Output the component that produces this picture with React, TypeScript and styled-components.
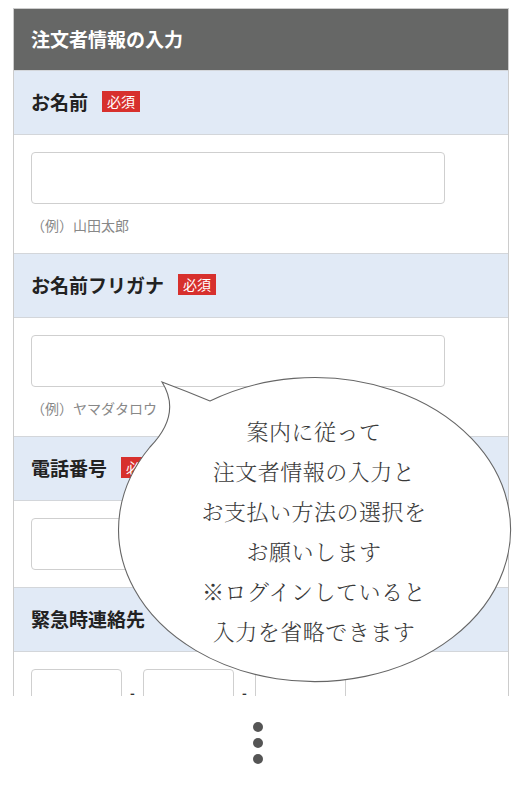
import styled, { createGlobalStyle } from "styled-components";

const GlobalStyle = createGlobalStyle`
    body {
        margin: 0;
        background: #fff;
        font-family: "Noto Sans CJK JP", "Noto Sans", sans-serif;
    }
`;

type FieldProps = {
    label: string;
    required?: boolean;
    hint?: string;
};

const TextField = ({ label, required, hint }: FieldProps) => {
    return (
        <>
            <SectionHead>
                <span>{label}</span>
                {required && <Badge>必須</Badge>}
            </SectionHead>
            <FieldBody>
                <TextInput type="text" />
                {hint && <Hint>{hint}</Hint>}
            </FieldBody>
        </>
    );
};

const App = () => {
    return (
        <Page>
            <GlobalStyle />
            <Panel>
                <TitleBar>注文者情報の入力</TitleBar>
                <TextField label="お名前" required hint="（例）山田太郎" />
                <TextField label="お名前フリガナ" required hint="（例）ヤマダタロウ" />
                <TextField label="電話番号" required />
                <SectionHead>
                    <span>緊急時連絡先</span>
                </SectionHead>
                <FieldBody>
                    <PhoneRow>
                        <SmallInput type="text" />
                        <Dash>-</Dash>
                        <SmallInput type="text" />
                        <Dash>-</Dash>
                        <SmallInput type="text" />
                    </PhoneRow>
                </FieldBody>
            </Panel>
            <Dots>
                <Dot />
                <Dot />
                <Dot />
            </Dots>

            <Bubble>
                <BubbleShape width="519" height="796" viewBox="0 0 519 796">
                    <path
                        d="M 150 447 Q 182 414 162 382 Q 186 391 210 401 A 196 152 0 1 1 150 447 Z"
                        fill="#fff"
                        stroke="#666"
                        strokeWidth="1.1"
                    />
                </BubbleShape>
                <BubbleText>
                    案内に従って
                    <br />
                    注文者情報の入力と
                    <br />
                    お支払い方法の選択を
                    <br />
                    お願いします
                    <br />
                    ※ログインしていると
                    <br />
                    入力を省略できます
                </BubbleText>
            </Bubble>
        </Page>
    );
};

const Page = styled.div`
    position: relative;
    width: 519px;
    height: 796px;
    padding: 8px 0 0 13px;
    box-sizing: border-box;
    overflow: hidden;
`;

const Panel = styled.div`
    width: 496px;
    height: 688px;
    box-sizing: border-box;
    border: 1px solid #cccccc;
    border-bottom: none;
    overflow: hidden;
`;

const TitleBar = styled.div`
    display: flex;
    align-items: center;
    height: 61px;
    padding-left: 17px;
    padding-bottom: 2px;
    box-sizing: border-box;

    background: #666766;
    color: #fff;
    font-weight: 700;
    font-size: 19px;
`;

const SectionHead = styled.div`
    display: flex;
    align-items: center;
    gap: 14px;
    height: 64px;
    padding-left: 17px;
    padding-bottom: 2px;
    box-sizing: border-box;

    background: #e1eaf6;
    border-top: 1px solid #d3d6da;
    color: #222;
    font-weight: 700;
    font-size: 19px;
`;

const Badge = styled.span`
    display: inline-block;
    padding: 0 5px;
    line-height: 21px;

    background: #d7302d;
    color: #fff;
    font-weight: 400;
    font-size: 14px;
`;

const FieldBody = styled.div`
    padding: 17px 17px 17px;
    background: #fff;
    border-top: 1px solid #d3d6da;
`;

const TextInput = styled.input`
    display: block;
    width: 414px;
    height: 52px;
    box-sizing: border-box;
    margin: 0;

    border: 1px solid #cfcfcf;
    border-radius: 4px;
    background: #fff;
`;

const Hint = styled.div`
    margin-top: 10px;
    line-height: 22px;
    color: #888;
    font-size: 14px;
`;

const PhoneRow = styled.div`
    display: flex;
    align-items: flex-start;
    height: 52px;
`;

const SmallInput = styled(TextInput)`
    width: 91px;
`;

const Dash = styled.span`
    width: 21px;
    padding-top: 16px;
    line-height: 16px;
    text-align: center;
    color: #333;
    font-weight: 700;
    font-size: 13px;
`;

const Dots = styled.div`
    display: flex;
    flex-direction: column;
    align-items: center;
    gap: 6px;
    padding-top: 26px;
    margin-left: -16px;
`;

const Dot = styled.span`
    width: 10px;
    height: 10px;
    border-radius: 50%;
    background: #555;
`;

const Bubble = styled.div`
    position: absolute;
    inset: 0;
    pointer-events: none;
`;

const BubbleShape = styled.svg`
    position: absolute;
    top: 0;
    left: 0;
`;

const BubbleText = styled.div`
    position: absolute;
    top: 411px;
    left: 118px;
    width: 392px;

    text-align: center;
    line-height: 40px;
    letter-spacing: 0.5px;
    color: #3a3a3a;
    font-family: "Noto Serif CJK JP", "Noto Sans CJK JP", serif;
    font-weight: 300;
    font-size: 22px;
`;

export default App;
